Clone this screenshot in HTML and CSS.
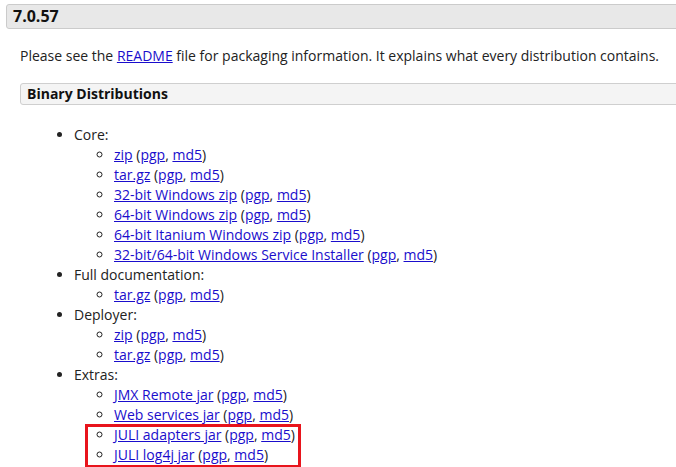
FILE: index.html
```html
<!DOCTYPE html>
<html>
<head>
<meta charset="utf-8">
<link rel="stylesheet" href="styles.css">
</head>
<body>
<div class="page">
  <h3 class="version">7.0.57</h3>
  <div class="section">
    <p class="intro">Please see the <a href="#">README</a> file for packaging information. It explains what every distribution contains.</p>
    <h4 class="sub">Binary Distributions</h4>
    <ul class="dist">
      <li>Core:
        <ul>
          <li><a href="#">zip</a> (<a href="#">pgp</a>, <a href="#">md5</a>)</li>
          <li><a href="#">tar.gz</a> (<a href="#">pgp</a>, <a href="#">md5</a>)</li>
          <li><a href="#">32-bit Windows zip</a> (<a href="#">pgp</a>, <a href="#">md5</a>)</li>
          <li><a href="#">64-bit Windows zip</a> (<a href="#">pgp</a>, <a href="#">md5</a>)</li>
          <li><a href="#">64-bit Itanium Windows zip</a> (<a href="#">pgp</a>, <a href="#">md5</a>)</li>
          <li><a href="#">32-bit/64-bit Windows Service Installer</a> (<a href="#">pgp</a>, <a href="#">md5</a>)</li>
        </ul>
      </li>
      <li>Full documentation:
        <ul>
          <li><a href="#">tar.gz</a> (<a href="#">pgp</a>, <a href="#">md5</a>)</li>
        </ul>
      </li>
      <li>Deployer:
        <ul>
          <li><a href="#">zip</a> (<a href="#">pgp</a>, <a href="#">md5</a>)</li>
          <li><a href="#">tar.gz</a> (<a href="#">pgp</a>, <a href="#">md5</a>)</li>
        </ul>
      </li>
      <li>Extras:
        <ul>
          <li><a href="#">JMX Remote jar</a> (<a href="#">pgp</a>, <a href="#">md5</a>)</li>
          <li><a href="#">Web services jar</a> (<a href="#">pgp</a>, <a href="#">md5</a>)</li>
          <li class="hl-wrap">
            <div class="highlight">
              <ul>
                <li><a href="#">JULI adapters jar</a> (<a href="#">pgp</a>, <a href="#">md5</a>)</li>
                <li><a href="#">JULI log4j jar</a> (<a href="#">pgp</a>, <a href="#">md5</a>)</li>
              </ul>
            </div>
          </li>
        </ul>
      </li>
    </ul>
  </div>
</div>
</body>
</html>
```

FILE: styles.css
```css
html, body {
  margin: 0;
  padding: 0;
  background: #fff;
}
body {
  font-family: "Open Sans", "Noto Sans", sans-serif;
  font-size: 14px;
  line-height: 20px;
  color: #222;
  overflow: hidden;
}
.page {
  padding: 4px 0 0 6px;
  width: 700px;
}
a {
  color: #1a0dcc;
  text-decoration: underline;
}
.version {
  margin: 0;
  height: 23px;
  line-height: 23px;
  padding: 0 0 0 6px;
  font-size: 16px;
  font-weight: 700;
  background: #e8e8e8;
  border: 1px solid #cbcbcb;
  border-radius: 3px;
  color: #111;
}
.section {
  padding-left: 14px;
}
.intro {
  margin: 17px 0 0 0;
  line-height: 20px;
}
.sub {
  margin: 17px 0 0 0;
  height: 20px;
  line-height: 20px;
  padding: 0 0 0 6px;
  font-size: 14px;
  font-weight: 700;
  background: #f4f4f4;
  border: 1px solid #cfcfcf;
  border-radius: 3px;
  color: #111;
}
.dist {
  margin: 20px 0 0 0;
  padding: 0 0 0 54px;
  list-style: disc;
}
.dist ul {
  margin: 0;
  padding: 0 0 0 40px;
  list-style: circle;
}
.hl-wrap {
  list-style: none;
  margin-left: -40px;
}
.highlight {
  border: 3px solid #e8141c;
  box-sizing: border-box;
  width: 216px;
  height: 44px;
  margin-left: 11px;
  margin-top: -1px;
}
.dist .highlight ul {
  padding-left: 26px;
  margin-top: -2px;
}
```
